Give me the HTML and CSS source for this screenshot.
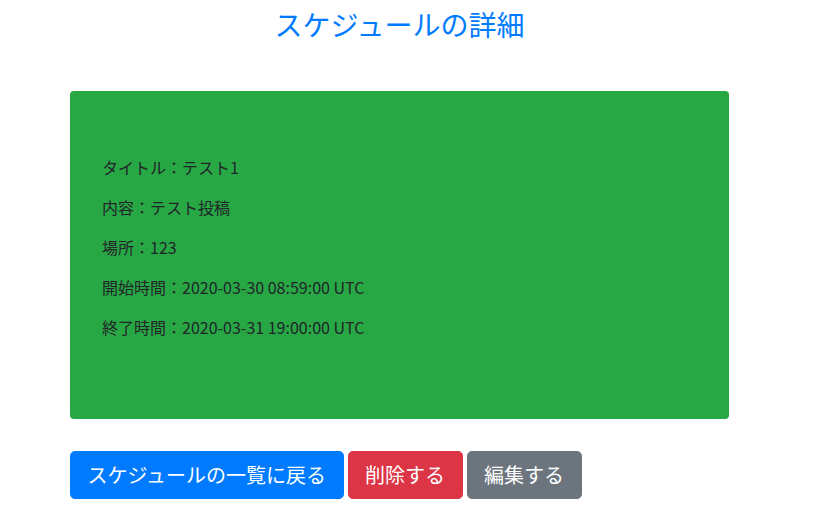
FILE: index.html
```html
<!DOCTYPE html>
<html lang="ja">
<head>
<meta charset="utf-8">
<title>スケジュールの詳細</title>
<link rel="stylesheet" href="styles.css">
</head>
<body>
<div class="page">
  <h1 class="title">スケジュールの詳細</h1>
  <div class="card">
    <p>タイトル：テスト1</p>
    <p>内容：テスト投稿</p>
    <p>場所：123</p>
    <p>開始時間：2020-03-30 08:59:00 UTC</p>
    <p>終了時間：2020-03-31 19:00:00 UTC</p>
  </div>
  <div class="actions">
    <a class="btn btn-primary" href="#">スケジュールの一覧に戻る</a>
    <a class="btn btn-danger" href="#">削除する</a>
    <a class="btn btn-secondary" href="#">編集する</a>
  </div>
</div>
</body>
</html>
```

FILE: styles.css
```css
html, body {
  margin: 0;
  padding: 0;
  background: #fff;
}
body {
  font-family: "Noto Sans CJK JP", "Noto Sans", sans-serif;
  color: #212529;
  font-size: 16px;
  line-height: 1.5;
}
.page {
  width: 659px;
  margin-left: 70px;
}
.title {
  margin: 8px 0 0;
  font-size: 28px;
  font-weight: 400;
  line-height: 1.2;
  color: #007bff;
  text-align: center;
}
.card {
  margin-top: 49px;
  background: #28a745;
  border-radius: 4px;
  padding: 64px 32px 48px;
  height: 328px;
  box-sizing: border-box;
}
.card p {
  margin: 0 0 16px;
  line-height: 24px;
}
.actions {
  display: flex;
  gap: 4px;
  margin-top: 32px;
}
.btn {
  display: inline-block;
  padding: 8px 16.5px;
  font-size: 20px;
  line-height: 30px;
  border: 1px solid transparent;
  border-radius: 4.8px;
  color: #fff;
  text-decoration: none;
}
.btn-primary { background: #007bff; border-color: #007bff; }
.btn-danger { background: #dc3545; border-color: #dc3545; }
.btn-secondary { background: #6c757d; border-color: #6c757d; }
```
